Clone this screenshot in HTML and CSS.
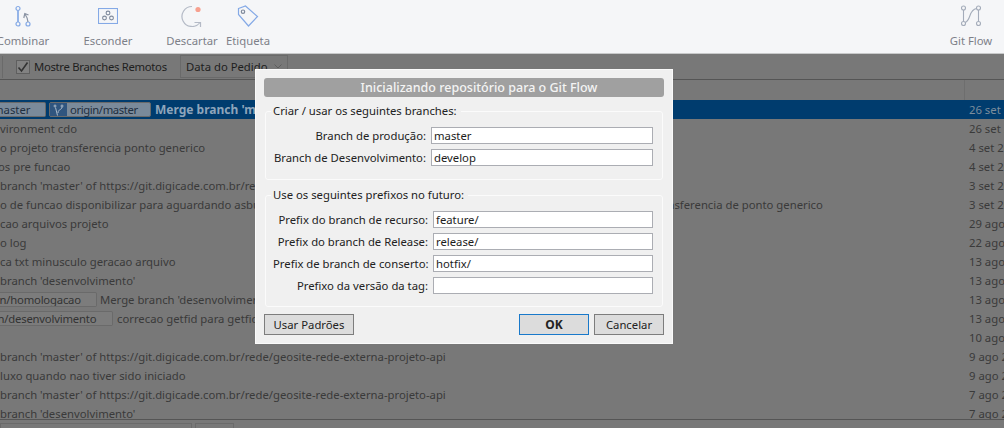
FILE: index.html
```html
<!DOCTYPE html>
<html lang="pt">
<head>
<meta charset="utf-8">
<title>Git Flow</title>
<link rel="stylesheet" href="styles.css">
</head>
<body>
<div class="toolbar">
  <div class="tool tool-combinar">
    <svg width="18" height="22" viewBox="0 0 18 22" fill="none" stroke="#84a9e6" stroke-width="1.2">
      <circle cx="4" cy="3.500" r="2"/><circle cx="4" cy="19" r="2"/><circle cx="14" cy="19" r="2"/>
      <path d="M4 5.500v11.500" stroke-width="1.700"/>
      <path d="M14 17c0-3-1-5-3-8M9.800 13l1-4.500 3.700 1.500" stroke="#8a93a3"/>
    </svg>
    <span>Combinar</span>
  </div>
  <div class="tool tool-esconder">
    <svg width="20" height="16" viewBox="0 0 20 16" fill="none" stroke="#84a9e6" stroke-width="1.100">
      <rect x=".5" y=".5" width="19" height="15"/>
      <g stroke="#7f8a9c"><circle cx="10" cy="5" r="1.900"/><circle cx="6.500" cy="10" r="1.900"/><circle cx="13.500" cy="10" r="1.900"/></g>
    </svg>
    <span>Esconder</span>
  </div>
  <div class="tool tool-descartar">
    <svg width="22" height="22" viewBox="0 0 22 22" fill="none" stroke="#b4bac6" stroke-width="1.200">
      <path d="M11 1.500A10 10 0 1 0 19 17.500"/><path d="M13.500 17.500h6v4.500"/>
      <circle cx="17" cy="4.500" r="2.600" fill="#f7a08f" stroke="none"/>
    </svg>
    <span>Descartar</span>
  </div>
  <div class="tool tool-etiqueta">
    <svg width="22" height="22" viewBox="0 0 22 22" fill="none" stroke="#84a9e6" stroke-width="1.200">
      <path d="M1.500 3.500l7-2.500 12 10.500-9 9.500-10-11.500z"/><circle cx="6" cy="6.700" r="1.700" stroke="#7f8a9c"/>
    </svg>
    <span>Etiqueta</span>
  </div>
  <div class="tool tool-flow">
    <svg width="20" height="22" viewBox="0 0 20 22" fill="none" stroke="#a4acba" stroke-width="1.100">
      <circle cx="2.500" cy="3" r="2"/><circle cx="17.500" cy="3" r="2"/><circle cx="2.500" cy="18.500" r="2"/><circle cx="17.500" cy="18.500" r="2"/>
      <path d="M2.500 5v11.500M17.500 5v11.500M4 17.500c3-1 4-4 5-7s2-6 6.500-7"/>
    </svg>
    <span>Git Flow</span>
  </div>
</div>

<div class="filters">
  <span class="filter-cut"></span>
  <span class="check"><svg width="12" height="12" viewBox="0 0 12 12" fill="none" stroke="#333" stroke-width="1.600"><path d="M1.500 6.500l3 3.500 6-8.500"/></svg></span>
  <span class="check-label">Mostre Branches Remotos</span>
  <span class="select">Data do Pedido<svg width="8" height="5" viewBox="0 0 8 5" fill="none" stroke="#5e5e5e"><path d="M.5.500l3.500 3.500 3.500-3.500"/></svg></span>
</div>

<div class="list">
  <div class="list-head"><span class="head-date"></span></div>
  <div class="row selected"><div class="msg"><span class="tag tag-cut tag-master">master</span><span class="tag tag-origin"><i class="tag-ico"><svg width="11" height="12" viewBox="0 0 11 12" fill="none" stroke="#a9b9c9"><circle cx="2" cy="2" r="1"/><circle cx="9" cy="2" r="1"/><path d="M2.500 3.500l2 8M9 3c0 3-4 2-4 6"/></svg></i>origin/master</span><b>Merge branch 'master' of https://git.digicade.com.br/rede</b></div><div class="date">26 set 2019</div></div>
  <div class="row"><div class="msg">vironment cdo</div><div class="date">26 set 2019</div></div>
  <div class="row"><div class="msg">o projeto transferencia ponto generico</div><div class="date">4 set 2019</div></div>
  <div class="row"><div class="msg"><span class="cut">os pre funcao</span></div><div class="date">4 set 2019</div></div>
  <div class="row"><div class="msg">branch 'master' of https://git.digicade.com.br/rede/geosite-rede-externa-projeto-api</div><div class="date">3 set 2019</div></div>
  <div class="row"><div class="msg">o de funcao disponibilizar para aguardando asbuilt arquivos apos geracao do ponto na transferencia de ponto generico na transferencia de ponto generico</div><div class="date">3 set 2019</div></div>
  <div class="row"><div class="msg">cao arquivos projeto</div><div class="date">29 ago 2019</div></div>
  <div class="row"><div class="msg">o log</div><div class="date">22 ago 2019</div></div>
  <div class="row"><div class="msg">ca txt minusculo geracao arquivo</div><div class="date">13 ago 2019</div></div>
  <div class="row"><div class="msg">branch 'desenvolvimento'</div><div class="date">13 ago 2019</div></div>
  <div class="row"><div class="msg"><span class="tag tag-cut tag-homolog">gin/homologacao</span>Merge branch 'desenvolvimento' into homologacao</div><div class="date">13 ago 2019</div></div>
  <div class="row"><div class="msg"><span class="tag tag-cut tag-desenv">gin/desenvolvimento</span>correcao getfid para getfid</div><div class="date">13 ago 2019</div></div>
  <div class="row"><div class="msg"></div><div class="date">10 ago 2019</div></div>
  <div class="row"><div class="msg">branch 'master' of https://git.digicade.com.br/rede/geosite-rede-externa-projeto-api</div><div class="date">9 ago 2019</div></div>
  <div class="row"><div class="msg">luxo quando nao tiver sido iniciado</div><div class="date">9 ago 2019</div></div>
  <div class="row"><div class="msg">branch 'master' of https://git.digicade.com.br/rede/geosite-rede-externa-projeto-api</div><div class="date">7 ago 2019</div></div>
  <div class="row"><div class="msg">branch 'desenvolvimento'</div><div class="date">7 ago 2019</div></div>
</div>
<div class="status"><span class="status-box status-wide"></span><span class="status-box status-small"></span></div>

<div class="dialog">
  <div class="dialog-title">Inicializando repositório para o Git Flow</div>
  <fieldset class="group group-branches">
    <legend>Criar / usar os seguintes branches:</legend>
    <div class="field"><label>Branch de produção:</label><div class="input">master</div></div>
    <div class="field"><label>Branch de Desenvolvimento:</label><div class="input">develop</div></div>
  </fieldset>
  <fieldset class="group group-prefix">
    <legend>Use os seguintes prefixos no futuro:</legend>
    <div class="field"><label>Prefix do branch de recurso:</label><div class="input">feature/</div></div>
    <div class="field"><label>Prefix do branch de Release:</label><div class="input">release/</div></div>
    <div class="field"><label>Prefix de branch de conserto:</label><div class="input">hotfix/</div></div>
    <div class="field"><label>Prefixo da versão da tag:</label><div class="input"></div></div>
  </fieldset>
  <div class="dialog-buttons">
    <div class="btn btn-defaults">Usar Padrões</div>
    <div class="btn btn-ok">OK</div>
    <div class="btn btn-cancel">Cancelar</div>
  </div>
</div>
</body>
</html>
```

FILE: styles.css
```css
*{margin:0;padding:0;box-sizing:border-box;}
body{width:1004px;height:428px;overflow:hidden;position:relative;background:#787878;font-family:"Noto Sans","Open Sans",sans-serif;font-size:11.3px;color:#2e2e2e;}

.toolbar{display:flex;height:54px;background:#f5f6f8;border-bottom:1px solid #c8c9ca;padding-top:4px;}
.tool{display:grid;grid-template-rows:24px auto;row-gap:1px;justify-items:center;align-items:center;color:#7d8088;}
.tool svg{display:block;}
.tool span{line-height:16px;white-space:nowrap;}
.tool-combinar{width:56px;margin-left:-5px;}
.tool-esconder{width:60px;margin-left:27px;}
.tool-descartar{width:56px;margin-left:26px;}
.tool-etiqueta{width:56px;}
.tool-flow{width:50px;margin-left:auto;margin-right:8px;}

.filters{display:flex;align-items:center;height:26px;border-bottom:1px solid #555;color:#1e1e1e;}
.filter-cut{width:3px;height:22px;border-right:1px solid #6a6a6a;}
.check{display:flex;align-items:center;justify-content:center;width:14px;height:14px;margin-left:13px;border:1px solid #5f5f5f;background:#828282;}
.check-label{width:150px;padding-left:4px;white-space:nowrap;letter-spacing:-.3px;}
.select{display:flex;align-items:center;width:108px;height:23px;padding:0 5px;border:1px solid #6a6a6a;white-space:nowrap;}
.select svg{margin-left:auto;}

.list{height:340px;overflow:hidden;border-bottom:1px solid #555;}
.list-head{height:20px;display:flex;justify-content:flex-end;}
.head-date{width:40px;border-left:1px solid #6e6e6e;}
.row{display:flex;height:19px;line-height:19px;white-space:nowrap;color:#3a3a3a;}
.msg{flex:1;overflow:hidden;display:flex;align-items:center;}
.cut{margin-left:-2px;}
.date{width:40px;padding-left:5px;overflow:hidden;}
.selected{background:#003c6e;}
.selected b{margin-left:4px;color:#8ea5bb;font-size:12px;font-weight:700;}
.selected .date{color:#7c8d9c;}

.tag{display:flex;align-items:center;flex:none;height:15px;margin-right:4px;border:1px solid #6a6a6a;border-radius:2px;background:#7c7c7c;color:#333;}
.tag-cut{display:block;overflow:hidden;line-height:13px;border-left:none;border-radius:0 2px 2px 0;}
.tag-master{width:46px;margin-right:0;text-indent:-7px;background:#7a8a9a;color:#1f2f3f;}
.tag-origin{width:102px;margin-left:3px;margin-right:0;background:#7a8a9a;color:#1f2f3f;letter-spacing:-.4px;}
.tag-ico{display:flex;align-items:center;justify-content:center;width:17px;height:13px;margin-right:3px;background:#2f557f;}
.tag-homolog{width:97px;margin-right:3px;text-indent:-10px;letter-spacing:-.2px;}
.tag-desenv{width:113px;text-indent:-12px;letter-spacing:-.2px;}

.status{display:flex;gap:3px;padding-top:3px;}
.status-box{height:20px;border:1px solid #6a6a6a;}
.status-wide{width:192px;}
.status-small{width:39px;}

.dialog{position:absolute;left:255px;top:69px;width:418px;height:275px;background:#f0f0f0;border:1px solid #fafafa;padding:8px 8px 0;color:#222;}
.dialog-title{height:19px;padding-left:30px;line-height:19px;border-radius:3px;background:#a0a0a0;color:#f4f4f4;text-align:center;font-size:12.5px;font-weight:500;}
.group{height:77px;margin:6px 1px 0;padding:5px 0 0 7px;border:1px solid #fbfbfb;border-radius:3px;}
.group-prefix{height:120px;margin-top:7px;}
.group legend{margin-left:-2px;padding:0 4px 0 2px;line-height:16px;}
.field{display:flex;align-items:center;height:22px;}
label{flex:none;padding-right:5px;text-align:right;white-space:nowrap;}
.group-branches label{width:158px;}
.group-prefix label{width:160px;}
.input{flex:1;height:17px;margin-right:9px;padding-left:2px;line-height:15px;background:#fff;border:1px solid #abadb3;color:#1c1c1c;}

.dialog-buttons{display:flex;margin-top:7px;}
.btn{height:21px;line-height:19px;text-align:center;background:#dcdcdc;border:1px solid #7d7d7d;}
.btn-defaults{width:90px;}
.btn-ok{width:70px;margin-left:auto;border-color:#1979ca;font-size:12px;font-weight:700;}
.btn-cancel{width:70px;margin-left:5px;}
```
